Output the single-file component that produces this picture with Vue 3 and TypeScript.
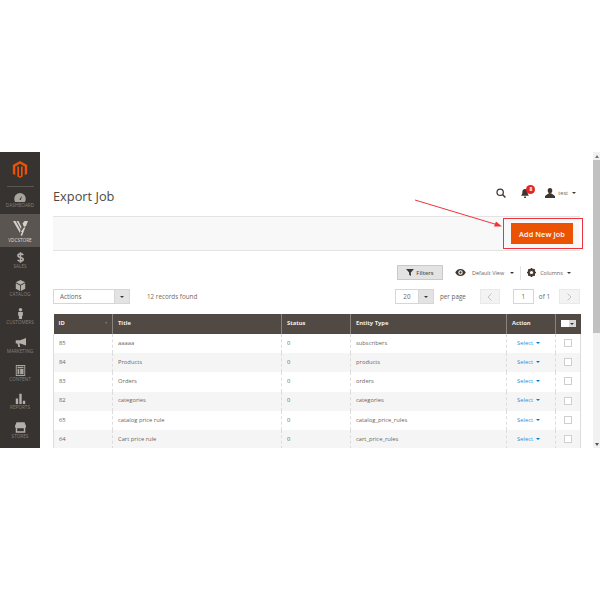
<script setup lang="ts">
interface Row { id: number; title: string; type: string }
const rows: Row[] = [
  { id: 85, title: 'aaaaa', type: 'subscribers' },
  { id: 84, title: 'Products', type: 'products' },
  { id: 83, title: 'Orders', type: 'orders' },
  { id: 82, title: 'categories', type: 'categories' },
  { id: 65, title: 'catalog price rule', type: 'catalog_price_rules' },
  { id: 64, title: 'Cart price rule', type: 'cart_price_rules' },
]
const navTop = ['SALES', 'CATALOG', 'CUSTOMERS', 'MARKETING', 'CONTENT', 'REPORTS', 'STORES']
</script>

<template>
  <div class="stage">
    <div class="window">
      <aside class="sidebar">
        <div class="logo">
          <svg width="16" height="17" viewBox="0 0 16 19">
            <path d="M8 0 L16 4.600 V14.200 L13.300 15.800 V6.200 L8 3.100 L2.700 6.200 V15.800 L0 14.200 V4.600 Z" fill="#eb5202" />
            <path d="M6.900 6.600 V16.500 L8 17.200 L9.100 16.500 V6.600 L11 5.600 V17.400 L8 19 L5 17.400 V5.600 Z" fill="#eb5202" />
          </svg>
        </div>
        <div class="rule"></div>
        <div class="nav-item dash">
          <svg class="i-dash" viewBox="0 0 14 11"><path d="M7 0A7 7 0 0 0 0 7c0 1.500.4 2.800 1 4h12c.6-1.200 1-2.500 1-4a7 7 0 0 0-7-7Z" fill="#a8a49e" /><path d="M6.200 8 9.500 3.500 8 8.500Z" fill="#35302c" /></svg>
          <span>DASHBOARD</span>
        </div>
        <div class="nav-item active">
          <svg class="i-vdc" viewBox="0 0 15 15"><path d="M0 0H2.500L7.500 9 7 12Z M3.500 0H5.500L8.500 6 8 8Z M9.500 2.500 11.500 0H15L13 5 11 6Z M10.500 7 12.500 6 9 15 7.500 14 9 11 7.800 11Z" fill="#d3d0cb" /></svg>
          <span class="strong">VDCSTORE</span>
        </div>
        <div v-for="n in navTop" :key="n" class="nav-item">
          <svg v-if="n === 'SALES'" viewBox="0 0 14 14"><path d="M10.500 3.800C9.800 2.900 8.500 2.400 7 2.400 5 2.400 3.700 3.300 3.700 4.800 3.700 8 10.500 6 10.500 9.300 10.500 10.800 9 11.600 7 11.600 5.400 11.600 4.100 11 3.400 10M7 .3V13.700" fill="none" stroke="#b3afa9" stroke-width="2" /></svg>
          <svg v-else-if="n === 'CATALOG'" viewBox="0 0 14 14"><path d="M7 0 13 3 7 6 1 3Z M1 4 6.500 7V14L1 11Z M13 4 7.500 7V14L13 11Z" fill="#b3afa9" /></svg>
          <svg v-else-if="n === 'CUSTOMERS'" viewBox="0 0 14 14"><circle cx="7" cy="2.300" r="2.300" fill="#b3afa9" /><path d="M4 5.200H10V10H9V14H5V10H4Z" fill="#b3afa9" /></svg>
          <svg v-else-if="n === 'MARKETING'" viewBox="0 0 15 14"><path d="M15 1V11L7 8.500H6L7 13H4.500L3.500 8.500H1V4H7Z" fill="#b3afa9" /></svg>
          <svg v-else-if="n === 'CONTENT'" viewBox="0 0 14 14"><path fill-rule="evenodd" d="M1 0H13V14H1Z M2.200 1.200V12.800H11.800V1.200Z M3.200 2.200H10.800V4H3.200Z M3.200 5H5.500V11.800H3.200Z M6.500 5H10.800V11.800H6.500Z" fill="#a8a49e" /></svg>
          <svg v-else-if="n === 'REPORTS'" viewBox="0 0 14 14"><path d="M1 7H4V14H1Z M5.500 1H8.500V14H5.500Z M10 10H13V14H10Z" fill="#b3afa9" /></svg>
          <svg v-else viewBox="0 0 15 14"><path fill-rule="evenodd" d="M2 0H13L15 5V7H14V14H1V7H0V5Z M3 8V12H12V8Z" fill="#b3afa9" /></svg>
          <span>{{ n }}</span>
        </div>
      </aside>

      <main class="page">
        <header class="head">
          <h1>Export Job</h1>
          <div class="tools">
            <svg class="search" width="10" height="10" viewBox="0 0 12 12"><circle cx="5" cy="5" r="3.800" fill="none" stroke="#41362f" stroke-width="1.500" /><path d="M7.800 7.800 11.300 11.300" stroke="#41362f" stroke-width="1.800" /></svg>
            <div class="bell">
              <svg width="8" height="9" viewBox="0 0 9 10"><path d="M4.500 0C2.500 0 1.500 1.500 1.500 3.500C1.500 5.500.8 6.500 0 7.500H9C8.200 6.500 7.500 5.500 7.500 3.500C7.500 1.500 6.500 0 4.500 0Z M3.500 8.300H5.500V10H3.500Z" fill="#41362f" /></svg>
              <b class="badge">8</b>
            </div>
            <div class="user">
              <svg width="10" height="10" viewBox="0 0 10 10"><path d="M5 0C6.500 0 7.300 1 7.300 2.600S6.500 5.500 5 5.500 2.700 4.200 2.700 2.600 3.500 0 5 0ZM3.400 5.500 0 8V10H10V8L6.600 5.500Z" fill="#41362f" /></svg>
              <span>test</span>
              <i class="caret dark tiny"></i>
            </div>
          </div>
        </header>

        <section class="action-bar">
          <button class="primary">Add New Job</button>
        </section>

        <div class="grid-tools">
          <button class="filters">
            <svg width="8" height="7" viewBox="0 0 9 8"><path d="M0 0H9L5.500 4V8L3.500 6.500V4Z" fill="#41362f" /></svg>
            Filters
          </button>
          <div class="view">
            <svg width="11" height="7" viewBox="0 0 12 8"><path fill-rule="evenodd" d="M6 0C9 0 11 2 12 4 11 6 9 8 6 8S1 6 0 4C1 2 3 0 6 0ZM6 1.500A2.500 2.500 0 1 0 6 6.500 2.500 2.500 0 0 0 6 1.500Z" fill="#41362f" /><circle cx="6" cy="4" r="1.300" fill="#41362f" /></svg>
            <span>Default View</span>
            <i class="caret dark tiny"></i>
          </div>
          <div class="divider"></div>
          <div class="view cols">
            <svg width="9" height="9" viewBox="0 0 9 9"><circle cx="4.500" cy="4.500" r="2.900" fill="none" stroke="#41362f" stroke-width="2" /><path d="M4.500 0V9M0 4.500H9M1.300 1.300 7.700 7.700M7.700 1.300 1.300 7.700" stroke="#41362f" stroke-width="1" /><circle cx="4.500" cy="4.500" r="1.600" fill="#fff" /></svg>
            <span>Columns</span>
            <i class="caret dark tiny"></i>
          </div>
        </div>

        <div class="pager-row">
          <div class="actions">
            <span class="actions-label">Actions</span>
            <span class="select-btn"><i class="caret dark tiny"></i></span>
          </div>
          <span class="records">12 records found</span>
          <div class="pager">
            <div class="perpage">
              <span class="pp-val">20</span>
              <span class="select-btn"><i class="caret dark tiny"></i></span>
            </div>
            <span class="pp-label">per page</span>
            <button class="nav-btn prev" aria-label="Previous"><svg width="5" height="8" viewBox="0 0 5 8"><path d="M4.500.5 1 4 4.500 7.500" fill="none" stroke="#c2c2c2" /></svg></button>
            <span class="page-num">1</span>
            <span class="of">of 1</span>
            <button class="nav-btn next" aria-label="Next"><svg width="5" height="8" viewBox="0 0 5 8"><path d="M.5.5 4 4 .5 7.500" fill="none" stroke="#c2c2c2" /></svg></button>
          </div>
        </div>

        <table class="grid">
          <thead>
            <tr>
              <th class="c-id"><span>ID</span><em>↑</em></th>
              <th class="c-title">Title</th>
              <th class="c-status">Status</th>
              <th class="c-type">Entity Type</th>
              <th class="c-action">Action</th>
              <th class="c-check"><span class="mass"><i></i><u><b class="caret dark mini"></b></u></span></th>
            </tr>
          </thead>
          <tbody>
            <tr v-for="r in rows" :key="r.id">
              <td>{{ r.id }}</td>
              <td>{{ r.title }}</td>
              <td>0</td>
              <td>{{ r.type }}</td>
              <td class="sel"><a>Select</a><i class="caret blue"></i></td>
              <td class="chk"><span class="box"></span></td>
            </tr>
          </tbody>
        </table>
      </main>

      <div class="scrollbar">
        <span class="arr up"></span>
        <span class="thumb"></span>
        <span class="arr down"></span>
      </div>

      <div class="callout"></div>
      <svg class="arrow" width="92" height="32" viewBox="0 0 92 32">
        <path d="M0 1 83 26" stroke="#f0323c" stroke-width="1" fill="none" />
        <path d="M87 27.500 79 27.500 81 22.500Z" fill="#f0323c" />
      </svg>
    </div>
  </div>
</template>

<style>
html, body { margin: 0; background: #fff; }
</style>

<style scoped>
.stage { width: 600px; height: 600px; padding-top: 152px; box-sizing: border-box; background: #fff; font-family: "Open Sans", sans-serif; color: #41362f; overflow: hidden; }
.window { position: relative; display: flex; width: 600px; height: 296px; overflow: hidden; }
.sidebar { width: 40px; flex: none; background: #373330; display: flex; flex-direction: column; align-items: center; }
.logo { height: 34px; display: flex; align-items: flex-start; justify-content: center; padding-top: 9px; box-sizing: border-box; flex: none; }
.rule { width: 27px; height: 1px; background: #5a5551; flex: none; }
.nav-item { width: 40px; height: 28.300px; display: flex; flex-direction: column; align-items: center; justify-content: flex-end; gap: 0; padding-bottom: 5.500px; box-sizing: border-box; flex: none; }
.nav-item svg { width: 11px; height: 11px; flex: none; }
.nav-item span { font-size: 4.700px; line-height: 7px; color: #85807b; white-space: nowrap; }
.nav-item.dash { height: 27px; }
.nav-item .i-dash { width: 12px; height: 9px; }
.nav-item.active { background: #5a5550; height: 33px; padding-bottom: 3px; gap: 1.500px; }
.nav-item .i-vdc { width: 15px; height: 15px; }
.nav-item .strong { color: #dedbd7; }
.page { flex: 1; min-width: 0; padding: 0 13px; box-sizing: border-box; }
.head { display: flex; align-items: flex-start; justify-content: space-between; height: 64px; padding-right: 4px; }
h1 { margin: 34px 0 0; font-size: 12.800px; font-weight: 400; color: #514943; line-height: 20px; }
.tools { display: flex; align-items: center; gap: 15px; margin-top: 36px; height: 10px; font-size: 5.500px; color: #6d645c; }
.bell { position: relative; display: flex; width: 14px; margin-right: -5px; }
.badge { position: absolute; left: 5px; top: -4px; width: 9px; height: 9px; border-radius: 50%; background: #e22626; color: #fff; font-size: 5px; line-height: 9px; text-align: center; font-weight: 700; }
.user { display: flex; align-items: center; gap: 3px; }
.user .caret { margin-left: 1px; }
.action-bar { height: 35px; background: #f8f8f8; border-top: 1px solid #e3e3e3; border-bottom: 1px solid #e3e3e3; box-sizing: border-box; display: flex; align-items: center; justify-content: flex-end; padding-right: 7px; }
.primary { width: 62px; height: 21px; padding: 0; border: 0; background: #eb5202; color: #fff; font: 600 7.300px "Open Sans", sans-serif; letter-spacing: .1px; }
.grid-tools { display: flex; align-items: center; height: 15px; margin-top: 14px; padding-left: 344px; color: #6d645c; font-size: 5.500px; }
.filters { width: 46px; height: 15px; padding: 0; background: #e3e3e3; border: 1px solid #c9c9c9; display: flex; align-items: center; justify-content: center; gap: 2px; font: 600 5.800px "Open Sans", sans-serif; color: #5f5750; }
.view { display: flex; align-items: center; gap: 6px; margin-left: 12px; }
.divider { width: 1px; height: 14px; background: #e3e3e3; margin-left: 6px; }
.cols { margin-left: 6px; gap: 4px; }
.caret { display: inline-block; width: 0; height: 0; border-left: 2.500px solid transparent; border-right: 2.500px solid transparent; border-top: 3px solid #41362f; }
.caret.tiny { border-left-width: 2px; border-right-width: 2px; border-top-width: 2.500px; }
.caret.mini { border-left-width: 2px; border-right-width: 2px; border-top-width: 2.500px; }
.caret.blue { border-top-color: #007bdb; margin-left: 3px; border-left-width: 2px; border-right-width: 2px; border-top-width: 2.500px; vertical-align: 1px; }
.pager-row { display: flex; align-items: center; height: 15px; margin-top: 9px; font-size: 6.300px; color: #6d645c; }
.actions { width: 77px; height: 15px; border: 1px solid #d6d6d6; box-sizing: border-box; display: flex; background: #fff; }
.actions-label { flex: 1; padding-left: 6px; line-height: 13px; font-size: 6.300px; }
.select-btn { width: 14px; background: #e3e3e3; border-left: 1px solid #d6d6d6; display: flex; align-items: center; justify-content: center; }
.records { margin-left: 17px; color: #7b6a5a; }
.pager { margin-left: auto; display: flex; align-items: center; }
.perpage { width: 39px; height: 15px; border: 1px solid #d6d6d6; box-sizing: border-box; display: flex; background: #fff; }
.pp-val { flex: 1; text-align: center; line-height: 13px; }
.pp-label { margin-left: 6px; margin-right: 14px; }
.nav-btn { width: 20px; height: 15px; padding: 0; background: #f3f3f3; border: 1px solid #e9e9e9; display: flex; align-items: center; justify-content: center; }
.next { width: 21px; }
.page-num { width: 21px; height: 15px; margin-left: 13px; border: 1px solid #d6d6d6; box-sizing: border-box; text-align: center; line-height: 13px; }
.of { margin-left: 5px; margin-right: 9px; }
.grid { width: 527px; margin-top: 10px; border-collapse: collapse; table-layout: fixed; font-size: 5.800px; color: #6d645c; }
th { height: 20px; padding: 0 5px 2px; background: #514943; color: #f0eeec; font-weight: 700; font-size: 5.800px; text-align: left; border-right: 1px solid #8a837d; box-sizing: border-box; }
th:last-child { border-right: 0; }
.c-id { width: 59px; position: relative; }
.c-id em { position: absolute; right: 5px; top: 6px; font-style: normal; font-weight: 400; font-size: 4px; }
.c-title { width: 169px; }
.c-status { width: 69px; }
.c-type { width: 156px; }
.c-action { width: 49px; }
.c-check { width: 25px; padding: 0 0 1px; text-align: center; }
.mass { display: inline-flex; width: 15px; height: 7px; vertical-align: middle; }
.mass i { width: 8px; height: 7px; background: #fff; }
.mass u { width: 7px; height: 7px; background: #d9d9d9; display: flex; align-items: center; justify-content: center; }
td { height: 19.200px; padding: 0 5px 1.500px; border-right: 1px dashed #dcdcdc; box-sizing: border-box; }
td:first-child { border-left: 1px solid #dcdcdc; }
tbody tr:nth-child(even) td { background: #f5f5f5; }
td:last-child { border-right: 1px solid #dcdcdc; }
.sel { padding-left: 10px; padding-right: 0; white-space: nowrap; }
.sel a { color: #2a8fe0; }
.chk { text-align: center; padding: 0 1px 1.500px 0; }
.box { display: inline-block; width: 8px; height: 8px; box-sizing: border-box; border: 1px solid #cfcfcf; background: #fff; vertical-align: middle; }
.scrollbar { width: 7px; flex: none; background: #f1f1f1; position: relative; }
.thumb { position: absolute; left: 0; top: 8px; width: 7px; height: 173px; background: #c1c1c1; }
.arr { position: absolute; left: 2px; width: 0; height: 0; border-left: 2px solid transparent; border-right: 2px solid transparent; }
.arr.up { top: 3px; border-bottom: 3px solid #777; }
.arr.down { bottom: 2px; border-top: 3px solid #555; }
.callout { position: absolute; left: 503px; top: 66px; width: 80px; height: 31px; box-sizing: border-box; border: 1px solid #f0323c; }
.arrow { position: absolute; left: 415px; top: 47px; }
</style>
